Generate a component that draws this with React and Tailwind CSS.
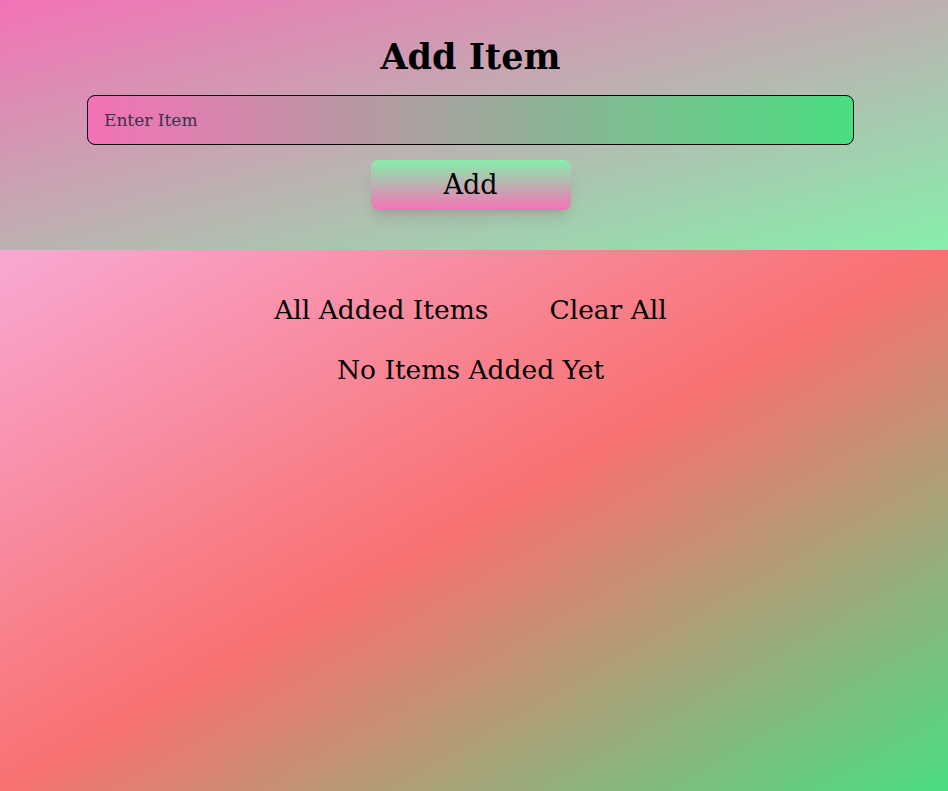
import React, { useState } from 'react';

export default function App() {
  const [item, setItem] = useState('');
  const [items, setItems] = useState([]);

  const addItem = () => {
    if (!item.trim()) return;
    setItems([...items, item.trim()]);
    setItem('');
  };

  return (
    <div className="min-h-[791px] flex flex-col font-['DejaVu_Serif',serif] text-black">
      <section className="h-[250px] bg-linear-to-br/srgb from-[#f472b6] to-[#86efac] flex flex-col items-center pr-[7px]">
        <h1 className="mt-[34px] text-[35px] leading-[46px] font-bold">Add Item</h1>
        <input
          value={item}
          onChange={(e) => setItem(e.target.value)}
          placeholder="Enter Item"
          className="mt-[15px] w-[767px] h-[50px] px-4 rounded-lg border border-black bg-linear-to-r/srgb from-[#f472b6] to-[#4ade80] text-[17px] outline-none placeholder:text-[#3a3050]"
        />
        <button
          onClick={addItem}
          className="mt-[15px] w-[200px] h-[50px] rounded-lg bg-linear-to-b/srgb from-[#86efac] to-[#f472b6] shadow-lg text-[27px]"
        >
          Add
        </button>
      </section>

      <section className="flex-1 bg-linear-to-br/srgb from-[#f9a8d4] via-[#f87171] to-[#4ade80] flex flex-col items-center pr-[7px]">
        <div className="mt-[40px] flex gap-[61px] text-[26.5px] leading-[40px]">
          <span>All Added Items</span>
          <button onClick={() => setItems([])}>Clear All</button>
        </div>
        {items.length === 0 ? (
          <p className="mt-[20px] text-[26.5px] leading-[40px]">No Items Added Yet</p>
        ) : (
          <ul className="mt-[20px] text-[24px]">
            {items.map((it, i) => <li key={i}>{it}</li>)}
          </ul>
        )}
      </section>
    </div>
  );
}
